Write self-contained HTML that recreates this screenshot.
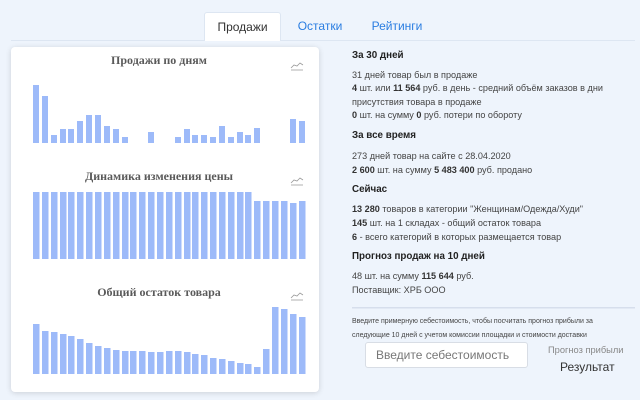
<!DOCTYPE html>
<html><head><meta charset="utf-8"><style>
*{margin:0;padding:0;box-sizing:border-box}
body{width:640px;height:400px;background:#eef4fc;position:relative;overflow:hidden;font-family:"Liberation Sans",sans-serif;color:#333}
.tabline{position:absolute;left:11px;top:40px;width:624px;height:1px;background:#dde6f2}
.tab{position:absolute;top:12px;height:29px;font-size:12px;line-height:28px;text-align:center}
.card{position:absolute;left:11px;top:47px;width:308px;height:345px;background:#fff;border-radius:4px;box-shadow:0 1px 6px rgba(0,0,0,.15)}
.ct{position:absolute;font-family:"Liberation Serif",serif;font-weight:bold;font-size:12px;color:#5a5a5a;width:308px;text-align:center}
.r{position:absolute;left:352px;font-size:9.1px;color:#444;white-space:nowrap}
.r b{color:#333}
.h{position:absolute;left:352px;font-size:9.8px;font-weight:bold;color:#222}
</style></head><body>
<div class="tabline"></div>
<div class="tab" style="left:204px;width:77px;background:#fff;border:1px solid #dde6f2;border-bottom:none;border-radius:3px 3px 0 0;color:#333">Продажи</div>
<div class="tab" style="left:290px;width:60px;color:#2a7de1">Остатки</div>
<div class="tab" style="left:362px;width:70px;color:#2a7de1">Рейтинги</div>
<div class="card">
<div class="ct" style="top:6px;left:-6px">Продажи по дням</div>
<div class="ct" style="top:122px;left:-6px">Динамика изменения цены</div>
<div class="ct" style="top:238px;left:-6px">Общий остаток товара</div>
</div>
<svg style="position:absolute;left:0;top:0" width="640" height="400">
<g fill="none" stroke="#999" stroke-width="0.8">
<path d="M291 68 L294 65 L297 66 L300 63 L303 65 M291 70 H303"/>
<path d="M291 183 L294 180 L297 181 L300 178 L303 180 M291 185 H303"/>
<path d="M291 298 L294 295 L297 296 L300 293 L303 295 M291 300 H303"/>
</g>
<g fill="#9dbaf9">
<rect x="33" y="85" width="6" height="58"/><rect x="42" y="96" width="6" height="47"/><rect x="51" y="135" width="6" height="8"/><rect x="60" y="129" width="6" height="14"/><rect x="68" y="129" width="6" height="14"/><rect x="77" y="121" width="6" height="22"/><rect x="86" y="115" width="6" height="28"/><rect x="95" y="115" width="6" height="28"/><rect x="104" y="126" width="6" height="17"/><rect x="113" y="129" width="6" height="14"/><rect x="122" y="137" width="6" height="6"/><rect x="148" y="132" width="6" height="11"/><rect x="175" y="137" width="6" height="6"/><rect x="184" y="129" width="6" height="14"/><rect x="192" y="135" width="6" height="8"/><rect x="201" y="135" width="6" height="8"/><rect x="210" y="137" width="6" height="6"/><rect x="219" y="126" width="6" height="17"/><rect x="228" y="137" width="6" height="6"/><rect x="237" y="132" width="6" height="11"/><rect x="245" y="135" width="6" height="8"/><rect x="254" y="128" width="6" height="15"/><rect x="290" y="119" width="6" height="24"/><rect x="299" y="121" width="6" height="22"/>
</g>
<g fill="#9dbaf9">
<rect x="33" y="192" width="6.5" height="67"/><rect x="42" y="192" width="6.5" height="67"/><rect x="51" y="192" width="6.5" height="67"/><rect x="60" y="192" width="6.5" height="67"/><rect x="68" y="192" width="6.5" height="67"/><rect x="77" y="192" width="6.5" height="67"/><rect x="86" y="192" width="6.5" height="67"/><rect x="95" y="192" width="6.5" height="67"/><rect x="104" y="192" width="6.5" height="67"/><rect x="113" y="192" width="6.5" height="67"/><rect x="122" y="192" width="6.5" height="67"/><rect x="130" y="192" width="6.5" height="67"/><rect x="139" y="192" width="6.5" height="67"/><rect x="148" y="192" width="6.5" height="67"/><rect x="157" y="192" width="6.5" height="67"/><rect x="166" y="192" width="6.5" height="67"/><rect x="175" y="192" width="6.5" height="67"/><rect x="184" y="192" width="6.5" height="67"/><rect x="192" y="192" width="6.5" height="67"/><rect x="201" y="192" width="6.5" height="67"/><rect x="210" y="192" width="6.5" height="67"/><rect x="219" y="192" width="6.5" height="67"/><rect x="228" y="192" width="6.5" height="67"/><rect x="237" y="192" width="6.5" height="67"/><rect x="245" y="192" width="6.5" height="67"/><rect x="254" y="201" width="6.5" height="58"/><rect x="263" y="201" width="6.5" height="58"/><rect x="272" y="201" width="6.5" height="58"/><rect x="281" y="201" width="6.5" height="58"/><rect x="290" y="203" width="6.5" height="56"/><rect x="299" y="201" width="6.5" height="58"/>
</g>
<g fill="#9dbaf9">
<rect x="33" y="324" width="6.5" height="50"/><rect x="42" y="331" width="6.5" height="43"/><rect x="51" y="332" width="6.5" height="42"/><rect x="60" y="334" width="6.5" height="40"/><rect x="68" y="336" width="6.5" height="38"/><rect x="77" y="339" width="6.5" height="35"/><rect x="86" y="343" width="6.5" height="31"/><rect x="95" y="346" width="6.5" height="28"/><rect x="104" y="348" width="6.5" height="26"/><rect x="113" y="350" width="6.5" height="24"/><rect x="122" y="351" width="6.5" height="23"/><rect x="130" y="351" width="6.5" height="23"/><rect x="139" y="351" width="6.5" height="23"/><rect x="148" y="352" width="6.5" height="22"/><rect x="157" y="352" width="6.5" height="22"/><rect x="166" y="351" width="6.5" height="23"/><rect x="175" y="351" width="6.5" height="23"/><rect x="184" y="352" width="6.5" height="22"/><rect x="192" y="354" width="6.5" height="20"/><rect x="201" y="355" width="6.5" height="19"/><rect x="210" y="358" width="6.5" height="16"/><rect x="219" y="359" width="6.5" height="15"/><rect x="228" y="361" width="6.5" height="13"/><rect x="237" y="363" width="6.5" height="11"/><rect x="245" y="364" width="6.5" height="10"/><rect x="254" y="367" width="6.5" height="7"/><rect x="263" y="349" width="6.5" height="25"/><rect x="272" y="307" width="6.5" height="67"/><rect x="281" y="309" width="6.5" height="65"/><rect x="290" y="314" width="6.5" height="60"/><rect x="299" y="317" width="6.5" height="57"/>
</g>
<rect x="352" y="307" width="283" height="1.5" fill="#d6deec"/>
</svg>
<div class="h" style="top:50px">За 30 дней</div>
<div class="r" style="top:70px">31 дней товар был в продаже</div>
<div class="r" style="top:83px"><b>4</b> шт. или <b>11 564</b> руб. в день - средний объём заказов в дни</div>
<div class="r" style="top:97px">присутствия товара в продаже</div>
<div class="r" style="top:110px"><b>0</b> шт. на сумму <b>0</b> руб. потери по обороту</div>
<div class="h" style="top:130px">За все время</div>
<div class="r" style="top:151px">273 дней товар на сайте с 28.04.2020</div>
<div class="r" style="top:165px"><b>2 600</b> шт. на сумму <b>5 483 400</b> руб. продано</div>
<div class="h" style="top:184px">Сейчас</div>
<div class="r" style="top:204px"><b>13 280</b> товаров в категории "Женщинам/Одежда/Худи"</div>
<div class="r" style="top:218px"><b>145</b> шт. на 1 складах - общий остаток товара</div>
<div class="r" style="top:232px"><b>6</b> - всего категорий в которых размещается товар</div>
<div class="h" style="top:251px">Прогноз продаж на 10 дней</div>
<div class="r" style="top:271px">48 шт. на сумму <b>115 644</b> руб.</div>
<div class="r" style="top:285px">Поставщик: ХРБ ООО</div>
<div class="r" style="top:318px;font-size:7px">Введите примерную себестоимость, чтобы посчитать прогноз прибыли за</div>
<div class="r" style="top:332px;font-size:7px">следующие 10 дней с учетом комиссии площадки и стоимости доставки</div>
<div style="position:absolute;left:365px;top:342px;width:163px;height:26px;background:#fff;border:1px solid #d8dde5;border-radius:3px;font-size:12px;color:#777;line-height:24px;padding-left:10px">Введите себестоимость</div>
<div style="position:absolute;left:548px;top:345px;font-size:9.3px;color:#888">Прогноз прибыли</div>
<div style="position:absolute;left:560px;top:360px;font-size:12px;color:#333">Результат</div>
</body></html>
